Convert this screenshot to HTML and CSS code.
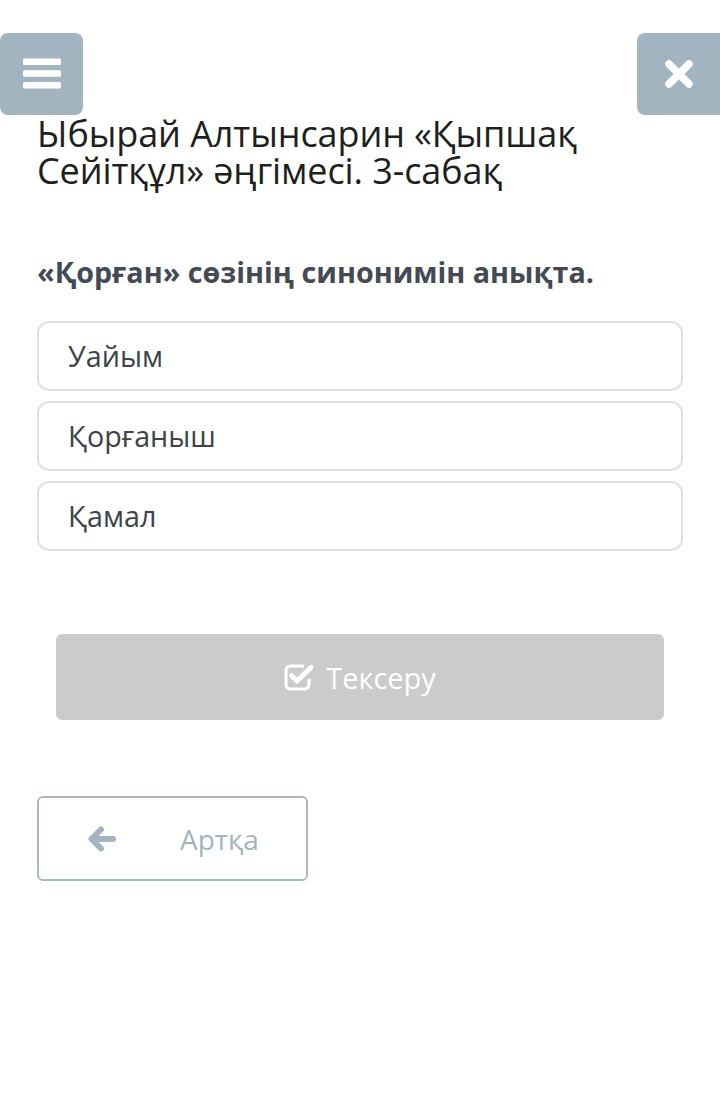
FILE: index.html
```html
<!DOCTYPE html>
<html lang="kk">
<head>
<meta charset="utf-8">
<title>Тест</title>
<link rel="stylesheet" href="styles.css">
</head>
<body>
<button class="corner-btn menu-btn" aria-label="Мәзір">
  <svg width="38" height="32" viewBox="0 0 38 32"><rect x="0" y="0.5" width="38" height="6.5" rx="1.5" fill="#fff"/><rect x="0" y="12.2" width="38" height="6.5" rx="1.5" fill="#fff"/><rect x="0" y="23.9" width="38" height="6.5" rx="1.5" fill="#fff"/></svg>
</button>
<button class="corner-btn close-btn" aria-label="Жабу">
  <svg width="32" height="32" viewBox="0 0 32 32"><path d="M6 6 L26 26 M26 6 L6 26" stroke="#fff" stroke-width="7.5" stroke-linecap="round"/></svg>
</button>
<main class="page">
  <h1 class="title">Ыбырай Алтынсарин «Қыпшақ Сейітқұл» әңгімесі. 3-сабақ</h1>
  <p class="question">«Қорған» сөзінің синонимін анықта.</p>
  <div class="options">
    <div class="option">Уайым</div>
    <div class="option">Қорғаныш</div>
    <div class="option">Қамал</div>
  </div>
  <div class="check-wrap">
    <button class="check-btn">
      <svg class="check-icon" width="31" height="28" viewBox="0 0 31 28"><path d="M20 3 H6.5 A4.5 4.5 0 0 0 2 7.5 V21.5 A4.5 4.5 0 0 0 6.5 26 H20.5 A4.5 4.5 0 0 0 25 21.5 V16" fill="none" stroke="#fff" stroke-width="3.2"/><path d="M7.5 12.5 L13 18 L27 4.5" fill="none" stroke="#fff" stroke-width="5" stroke-linecap="round" stroke-linejoin="round"/></svg>
      <span>Тексеру</span>
    </button>
  </div>
  <button class="back-btn">
    <svg class="back-icon" width="29" height="26" viewBox="0 0 29 26"><path d="M26 13 H6 M14 3.5 L4.5 13 L14 22.5" fill="none" stroke="#a3b4c0" stroke-width="6" stroke-linecap="round" stroke-linejoin="round"/></svg>
    <span>Артқа</span>
  </button>
</main>
</body>
</html>
```
FILE: styles.css
```css
html, body {
  margin: 0;
  padding: 0;
  background: #ffffff;
}
body {
  font-family: "Open Sans", "Noto Sans", sans-serif;
  width: 720px;
  min-height: 1104px;
  position: relative;
}
.corner-btn {
  position: absolute;
  top: 33px;
  width: 83px;
  height: 82px;
  border: none;
  border-radius: 8px;
  background: #a2b4c0;
  display: flex;
  align-items: center;
  justify-content: center;
  padding: 0;
}
.menu-btn {
  left: 0;
  padding-left: 1px;
}
.close-btn {
  right: 0;
  width: 83px;
  border-radius: 8px 0 0 8px;
}
.close-btn svg {
  margin-left: 1px;
}
.page {
  padding: 115px 37px 0;
}
.title {
  margin: 0;
  font-weight: 400;
  font-size: 36px;
  line-height: 37px;
  color: #1e1f21;
  letter-spacing: -0.1px;
}
.question {
  margin: 66px 0 0;
  font-weight: 700;
  font-size: 28.7px;
  line-height: 34px;
  color: #434a54;
}
.options {
  margin-top: 32px;
  display: flex;
  flex-direction: column;
  gap: 10px;
}
.option {
  height: 66px;
  border: 2px solid #dfe2e5;
  border-radius: 12px;
  display: flex;
  align-items: center;
  padding: 0 29px;
  font-size: 28.7px;
  line-height: 36px;
  color: #3d434a;
  box-sizing: content-box;
}
.check-wrap {
  margin-top: 83px;
  padding: 0 19px;
}
.check-btn {
  width: 100%;
  height: 86px;
  border: none;
  border-radius: 6px;
  background: #cbcbcb;
  display: flex;
  align-items: center;
  justify-content: center;
  gap: 11px;
  font-family: inherit;
  font-size: 29px;
  color: #ffffff;
  padding: 0;
}
.back-btn {
  margin-top: 76px;
  width: 271px;
  height: 85px;
  border: 2px solid #a9b9c4;
  border-radius: 6px;
  background: #ffffff;
  display: flex;
  align-items: center;
  padding: 0 0 0 48px;
  font-family: inherit;
  font-size: 28px;
  color: #a3b3bf;
}
.back-btn span {
  margin-left: 64px;
}
```
